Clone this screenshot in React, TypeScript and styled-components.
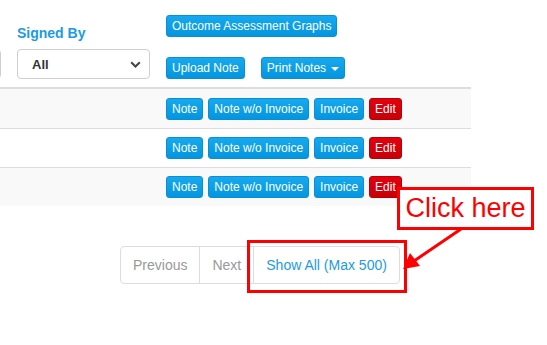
import React from "react";
import styled, { createGlobalStyle } from "styled-components";

const Global = createGlobalStyle`
  html, body { margin: 0; padding: 0; background: #fff; }
  body { font-family: "Liberation Sans", Arial, Helvetica, sans-serif; font-size: 14px; color: #333; overflow: hidden; }
  * { box-sizing: border-box; }
`;

const Page = styled.div`
  position: relative;
  width: 547px;
  height: 345px;
  overflow: hidden;
`;

const Header = styled.div`
  display: flex;
  align-items: flex-start;
  height: 87px;
`;

const FilterCol = styled.div<{ $cut?: boolean }>`
  display: flex;
  flex-direction: column;
  width: 133px;
  margin-left: ${(p) => (p.$cut ? "-132px" : "16px")};
  padding-top: 23px;
`;

const Label = styled.div`
  height: 20px;
  line-height: 20px;
  font-size: 14px;
  font-weight: bold;
  color: #1a9be3;
  margin-bottom: 6px;
`;

const SelectWrap = styled.div`
  position: relative;
  width: 133px;
  height: 30px;
`;

const Select = styled.select`
  appearance: none;
  -webkit-appearance: none;
  width: 100%;
  height: 30px;
  border: 1px solid #cfcfcf;
  border-radius: 4px;
  background: #fff;
  padding: 0 10px 0 14px;
  font-family: "Liberation Sans", Arial, sans-serif;
  font-size: 13px;
  font-weight: bold;
  color: #333;
  outline: none;
`;

const Chevron = styled.svg`
  position: absolute;
  right: 9px;
  top: 12px;
  pointer-events: none;
`;

const ActionCol = styled.div`
  display: flex;
  flex-direction: column;
  gap: 20px;
  margin-left: 16px;
  padding-top: 15px;
`;

const ActionRow = styled.div`
  display: flex;
  gap: 16px;
`;

const Btn = styled.button<{ $danger?: boolean }>`
  display: inline-flex;
  align-items: center;
  gap: 5px;
  height: 22px;
  padding: 0 5px;
  font-family: "Liberation Sans", Arial, sans-serif;
  font-size: 12px;
  line-height: 18px;
  color: #fff;
  border-radius: 3px;
  border: 1px solid ${(p) => (p.$danger ? "#b50008" : "#0a8fd4")};
  background: ${(p) =>
    p.$danger
      ? "linear-gradient(#e3000e, #c80007)"
      : "linear-gradient(#17a9ee, #0396df)"};
  white-space: nowrap;
  cursor: pointer;
`;

const Caret = styled.span`
  display: inline-block;
  width: 0;
  height: 0;
  border-left: 4px solid transparent;
  border-right: 4px solid transparent;
  border-top: 4px solid #fff;
  margin-top: 2px;
`;

const Table = styled.div`
  width: 471px;
  border-top: 2px solid #ddd;
`;

const Row = styled.div<{ $striped?: boolean; $first?: boolean }>`
  display: flex;
  align-items: center;
  padding: ${(p) => (p.$first ? "9px 8px 8px 166px" : "8px 8px 8px 166px")};
  background: ${(p) => (p.$striped ? "#f9f9f9" : "#fff")};
  border-top: ${(p) => (p.$first ? "none" : "1px solid #ddd")};
  gap: 5px;
`;

const Pagination = styled.ul`
  display: flex;
  list-style: none;
  margin: 40px 0 0 120px;
  padding: 0;
`;

const PageItem = styled.li<{ $active?: boolean; $first?: boolean; $last?: boolean }>`
  height: 38px;
  padding: 0 12px;
  line-height: 36px;
  font-size: 14px;
  color: ${(p) => (p.$active ? "#1a9be3" : "#999")};
  border: 1px solid #ddd;
  margin-left: ${(p) => (p.$first ? "0" : "-1px")};
  border-radius: ${(p) =>
    p.$first ? "4px 0 0 4px" : p.$last ? "0 4px 4px 0" : "0"};
  background: #fff;
`;

const Callout = styled.div`
  position: absolute;
  left: 397px;
  top: 187px;
  width: 137px;
  height: 43px;
  border: 3px solid #f00;
  background: #fff;
  color: #f00;
  font-size: 27px;
  line-height: 36px;
  text-align: center;
`;

const Highlight = styled.div`
  position: absolute;
  left: 247px;
  top: 240px;
  width: 160px;
  height: 53px;
  border: 3px solid #f00;
`;

const Arrow = styled.svg`
  position: absolute;
  left: 0;
  top: 0;
  pointer-events: none;
`;

const rows = [true, false, true];

export default function App() {
  return (
    <Page>
      <Global />
      <Header>
        <FilterCol $cut>
          <Label>&nbsp;</Label>
          <SelectWrap>
            <Select><option>All</option></Select>
          </SelectWrap>
        </FilterCol>
        <FilterCol>
          <Label>Signed By</Label>
          <SelectWrap>
            <Select defaultValue="All"><option>All</option></Select>
            <Chevron width="11" height="7" viewBox="0 0 11 7">
              <path d="M1.2 1.2 L5.5 5.5 L9.8 1.2" fill="none" stroke="#444" strokeWidth="2" />
            </Chevron>
          </SelectWrap>
        </FilterCol>
        <ActionCol>
          <ActionRow>
            <Btn>Outcome Assessment Graphs</Btn>
          </ActionRow>
          <ActionRow>
            <Btn>Upload Note</Btn>
            <Btn>Print Notes <Caret /></Btn>
          </ActionRow>
        </ActionCol>
      </Header>
      <Table>
        {rows.map((striped, i) => (
          <Row key={i} $striped={striped} $first={i === 0}>
            <Btn>Note</Btn>
            <Btn>Note w/o Invoice</Btn>
            <Btn>Invoice</Btn>
            <Btn $danger>Edit</Btn>
          </Row>
        ))}
      </Table>
      <Pagination>
        <PageItem $first>Previous</PageItem>
        <PageItem>Next</PageItem>
        <PageItem $active $last>Show All (Max 500)</PageItem>
      </Pagination>
      <Highlight />
      <Callout>Click here</Callout>
      <Arrow width="547" height="345" viewBox="0 0 547 345">
        <line x1="461" y1="229" x2="414" y2="261" stroke="#f00" strokeWidth="3" />
        <polygon points="403,269 410,253 420,266" fill="#f00" />
      </Arrow>
    </Page>
  );
}
